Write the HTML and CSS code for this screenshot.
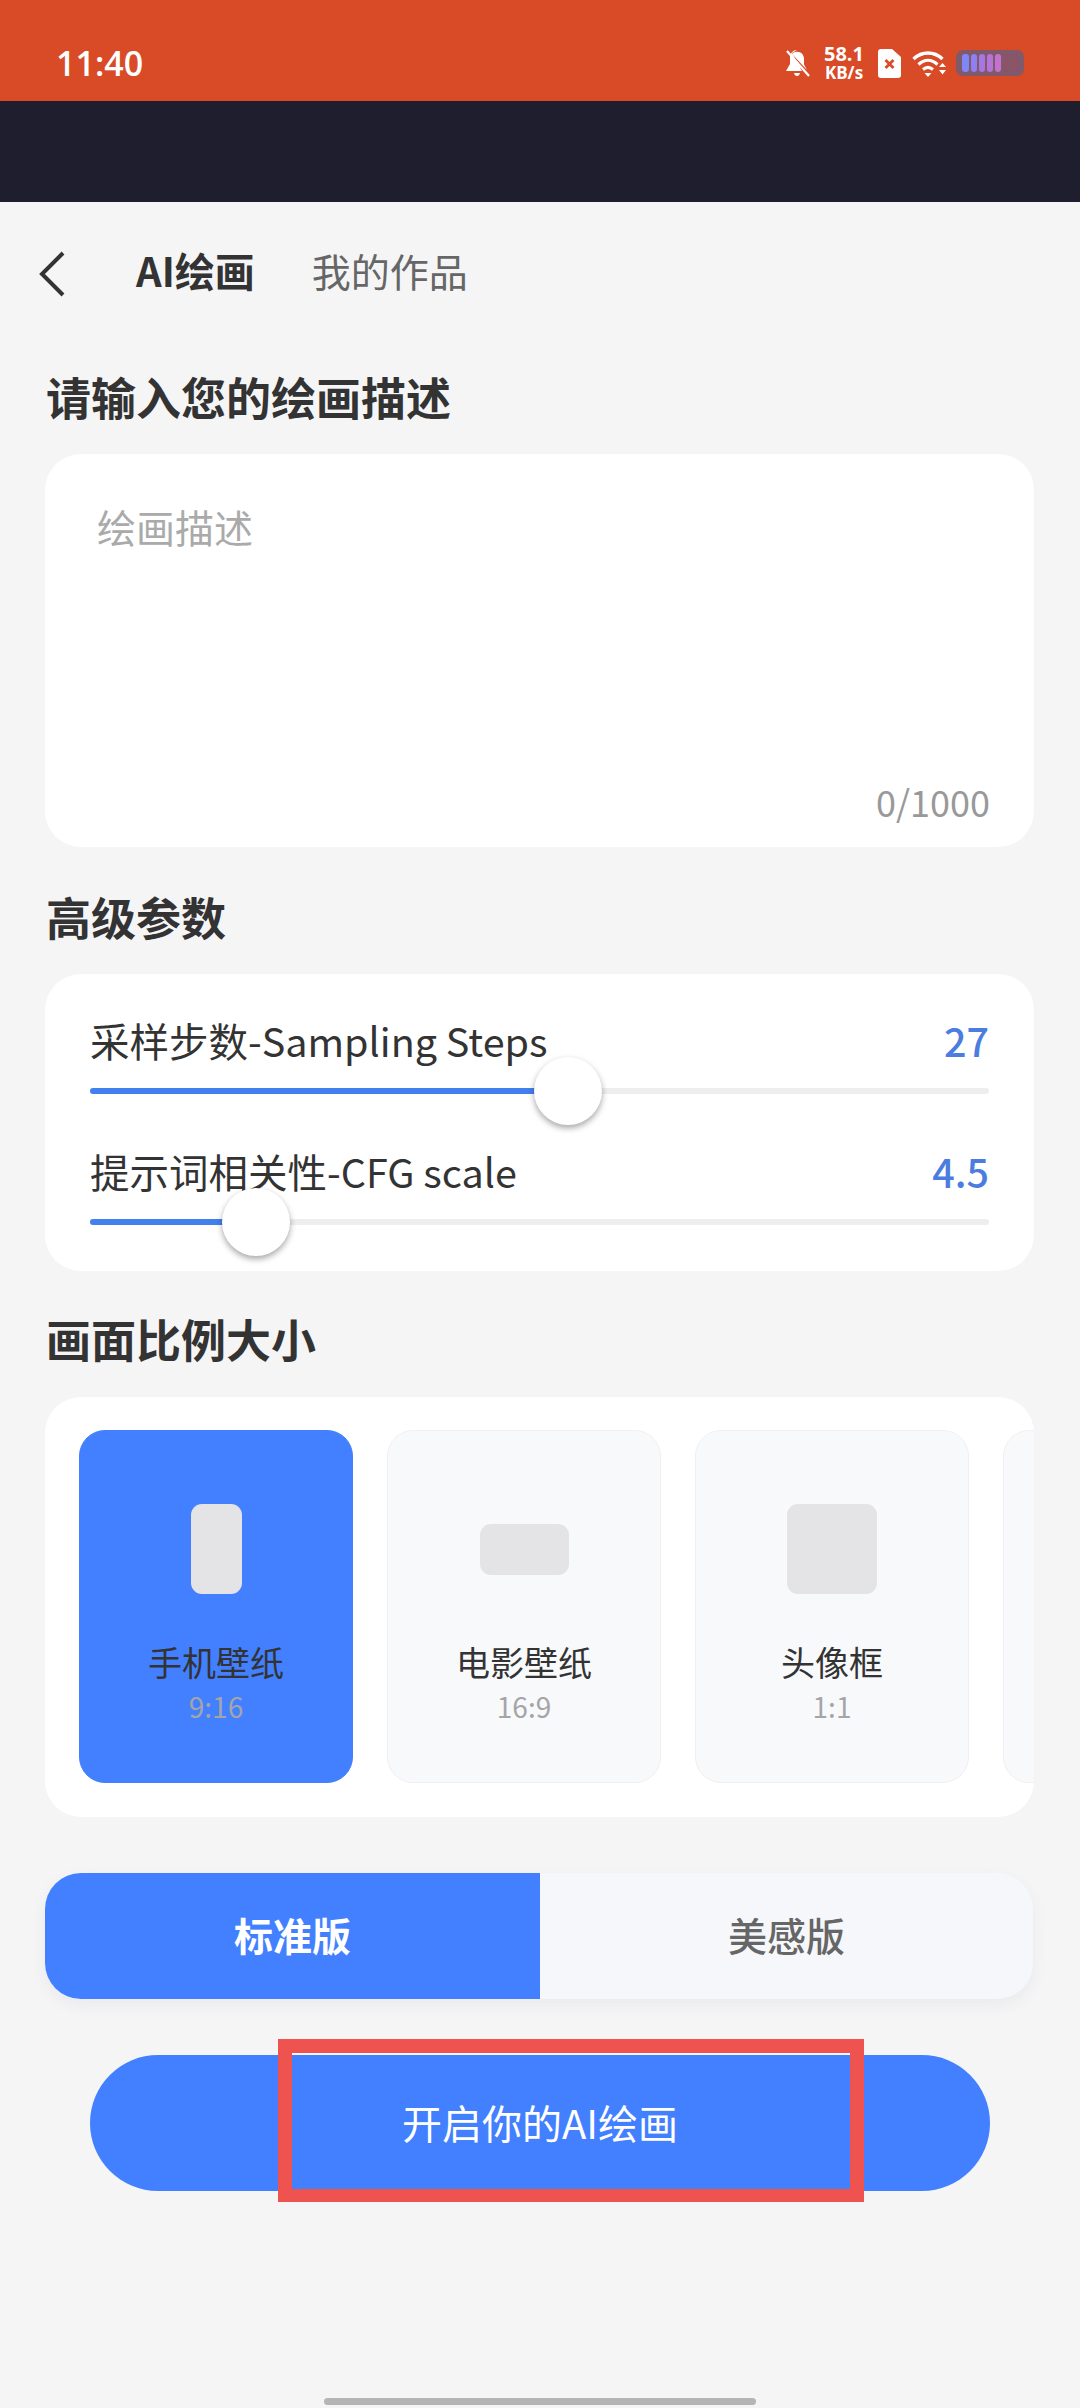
FILE: index.html
```html
<!DOCTYPE html>
<html lang="zh-CN">
<head>
    <meta charset="UTF-8">
    <meta name="viewport" content="width=device-width, initial-scale=1.0">
    <title>AI绘画</title>
    <link rel="stylesheet" href="styles.css">
</head>
<body>
    <div class="status-bar">
        <span class="clock">11:40</span>
        <div class="status-icons">
            <svg class="icon-bell" width="27" height="29" viewBox="0 0 27 29">
                <path d="M13 1c-4 0-7 3-7 8v6l-4 7h16L8 4" fill="#fff"/>
                <path d="M8 5c1.400-1.500 3-2.200 5-2.200 4.500 0 7 3.200 7 7.200v5.500l3 5.500z" fill="#fff"/>
                <path d="M10 24h6c-.5 2-1.500 3-3 3s-2.500-1-3-3z" fill="#fff"/>
                <path d="M3 2l22 25" stroke="#fff" stroke-width="2.200"/>
            </svg>
            <div class="net-speed">
                <span class="net-value">58.1</span>
                <span class="net-unit">KB/s</span>
            </div>
            <svg class="icon-sim" width="23" height="29" viewBox="0 0 23 29">
                <path d="M3 0h11l9 8v18a3 3 0 0 1-3 3H3a3 3 0 0 1-3-3V3a3 3 0 0 1 3-3z" fill="#fff"/>
                <path d="M7.500 11l8 8M15.500 11l-8 8" stroke="#d84b26" stroke-width="2.800"/>
            </svg>
            <svg class="icon-wifi" width="34" height="27" viewBox="0 0 34 27">
                <path d="M1.500 9C10 1 22 1 30.500 9" fill="none" stroke="#fff" stroke-width="3.400"/>
                <path d="M6.500 14.500c6-5.500 13-5.500 19 0" fill="none" stroke="#fff" stroke-width="3.200"/>
                <path d="M11 19.500c3.500-3 6.500-3 10 0" fill="none" stroke="#fff" stroke-width="3"/>
                <path d="M12.500 23h7L16 27z" fill="#fff"/>
                <path d="M27 17l3.500-4 3.500 4zM27 20h7l-3.500 4.500z" fill="#fff"/>
            </svg>
            <svg class="icon-battery" width="68" height="26" viewBox="0 0 68 26">
                <rect width="68" height="26" rx="7" fill="#80596a"/>
                <rect x="6" y="4" width="7" height="18" rx="3" fill="#7f86f5"/>
                <rect x="15" y="4" width="6" height="18" rx="3" fill="#8f80f0"/>
                <rect x="23" y="4" width="6" height="18" rx="3" fill="#a477e2"/>
                <rect x="31" y="4" width="6" height="18" rx="3" fill="#b673d8"/>
                <rect x="39" y="4" width="6" height="18" rx="3" fill="#c272cf"/>
                <rect x="48" y="4" width="6" height="18" rx="2" fill="#8c5268"/>
                <rect x="56" y="4" width="6" height="18" rx="2" fill="#8c5268"/>
            </svg>
        </div>
    </div>
    <div class="dark-bar"></div>

    <div class="nav">
        <svg class="back" width="28" height="46" viewBox="0 0 28 46">
            <path d="M25 2L4 23l21 21" fill="none" stroke="#333" stroke-width="4"/>
        </svg>
        <span class="nav-tab active">AI绘画</span>
        <span class="nav-tab">我的作品</span>
    </div>

    <h2 class="section-title first">请输入您的绘画描述</h2>
    <div class="card prompt-card">
        <div class="placeholder">绘画描述</div>
        <div class="counter">0/1000</div>
    </div>

    <h2 class="section-title">高级参数</h2>
    <div class="card sliders-card">
        <div class="slider-head">
            <span>采样步数-Sampling Steps</span>
            <span class="slider-value">27</span>
        </div>
        <div class="track">
            <div class="track-fill" style="width: 478px"></div>
            <div class="thumb" style="left: 478px"></div>
        </div>
        <div class="slider-head second">
            <span>提示词相关性-CFG scale</span>
            <span class="slider-value">4.5</span>
        </div>
        <div class="track">
            <div class="track-fill" style="width: 166px"></div>
            <div class="thumb" style="left: 166px"></div>
        </div>
    </div>

    <h2 class="section-title ratio-title">画面比例大小</h2>
    <div class="card ratio-card">
        <div class="tile selected">
            <div class="tile-slot"><div class="shape shape-tall"></div></div>
            <div class="tile-name">手机壁纸</div>
            <div class="tile-ratio">9:16</div>
        </div>
        <div class="tile">
            <div class="tile-slot"><div class="shape shape-wide"></div></div>
            <div class="tile-name">电影壁纸</div>
            <div class="tile-ratio">16:9</div>
        </div>
        <div class="tile">
            <div class="tile-slot"><div class="shape shape-square"></div></div>
            <div class="tile-name">头像框</div>
            <div class="tile-ratio">1:1</div>
        </div>
        <div class="tile"></div>
    </div>

    <div class="version-toggle">
        <div class="version on">标准版</div>
        <div class="version">美感版</div>
    </div>

    <div class="start-wrap">
        <button class="start-btn">开启你的AI绘画</button>
        <div class="red-mark"></div>
    </div>

    <div class="home-bar"></div>
</body>
</html>
```

FILE: styles.css
```css
* {
    box-sizing: border-box;
}
body {
    margin: 0;
    width: 1080px;
    height: 2408px;
    overflow: hidden;
    background-color: #f5f5f6;
    font-family: "Noto Sans CJK SC", "Noto Sans", sans-serif;
    color: #333;
}
.status-bar {
    height: 101px;
    background-color: #d84b26;
    display: flex;
    align-items: center;
    justify-content: space-between;
    padding: 25px 56px 0 56px;
    color: #fff;
}
.clock {
    font-family: "Open Sans", sans-serif;
    font-size: 34px;
    font-weight: 600;
}
.status-icons {
    display: flex;
    align-items: center;
}
.net-speed {
    display: flex;
    flex-direction: column;
    align-items: center;
    width: 40px;
    margin-left: 13px;
    font-family: "Open Sans", sans-serif;
    font-weight: 700;
}
.net-value {
    font-size: 20px;
    line-height: 20px;
}
.net-unit {
    font-size: 17px;
    line-height: 18px;
}
.icon-sim {
    margin-left: 14px;
}
.icon-wifi {
    margin-left: 11px;
}
.icon-battery {
    margin-left: 10px;
}
.dark-bar {
    height: 101px;
    background-color: #1e1e2e;
}
.nav {
    height: 142px;
    display: flex;
    align-items: center;
    padding-left: 38px;
}
.back {
    margin-top: 2px;
}
.nav-tab {
    font-size: 39px;
    color: #666;
    margin-left: 57px;
    line-height: 50px;
    position: relative;
    top: -3px;
}
.nav-tab.active {
    font-size: 40px;
    font-weight: 700;
    color: #333;
    margin-left: 70px;
}
.section-title {
    margin: 40px 0 27px 46px;
    font-size: 45px;
    line-height: 60px;
    font-weight: 700;
    color: #333;
}
.section-title.first {
    margin-top: 23px;
}
.section-title.ratio-title {
    margin-top: 38px;
    margin-bottom: 28px;
}
.card {
    margin: 0 46px 0 45px;
    background-color: #fff;
    border-radius: 36px;
}
.prompt-card {
    height: 393px;
    display: flex;
    flex-direction: column;
    justify-content: space-between;
    padding: 47px 44px 21px 52px;
}
.placeholder {
    font-size: 39px;
    line-height: 50px;
    color: #aaa;
}
.counter {
    text-align: right;
    font-size: 36px;
    line-height: 50px;
    color: #999;
}
.sliders-card {
    height: 297px;
    padding: 38px 45px 0 45px;
}
.slider-head {
    display: flex;
    justify-content: space-between;
    font-size: 39.5px;
    line-height: 56px;
    color: #333;
}
.slider-head.second {
    margin-top: 49px;
}
.slider-value {
    color: #4a7ddf;
    font-weight: 500;
}
.track {
    position: relative;
    height: 6px;
    margin-top: 20px;
    background-color: #eee;
    border-radius: 3px;
}
.track-fill {
    height: 100%;
    background-color: #4280f0;
    border-radius: 3px;
}
.thumb {
    position: absolute;
    top: -31px;
    margin-left: -34px;
    width: 68px;
    height: 68px;
    border-radius: 50%;
    background-color: #fff;
    box-shadow: 0 3px 6px rgba(0, 0, 0, 0.35);
}
.ratio-card {
    height: 420px;
    padding: 33px 0 0 34px;
    display: flex;
    gap: 34px;
    overflow: hidden;
}
.tile {
    flex: none;
    width: 274px;
    height: 353px;
    padding-top: 73px;
    border-radius: 26px;
    background-color: #f8f9fb;
    border: 1px solid #f0f0f2;
    display: flex;
    flex-direction: column;
    align-items: center;
}
.tile.selected {
    background-color: #4280ff;
    border-color: #4280ff;
}
.tile-slot {
    height: 90px;
    display: flex;
    align-items: center;
}
.shape {
    background-color: #e4e4e6;
    border-radius: 11px;
}
.shape-tall {
    width: 51px;
    height: 90px;
}
.shape-wide {
    width: 89px;
    height: 51px;
}
.shape-square {
    width: 90px;
    height: 90px;
}
.tile-name {
    margin-top: 46px;
    font-size: 34px;
    line-height: 44px;
    color: #333;
}
.tile-ratio {
    margin-top: 4px;
    font-size: 28px;
    line-height: 36px;
    color: #a5a5a8;
}
.version-toggle {
    margin: 56px 47px 0 45px;
    height: 126px;
    display: flex;
    border-radius: 36px;
    overflow: hidden;
    box-shadow: 0 6px 16px rgba(60, 70, 100, 0.06);
    background-color: #f5f7fb;
}
.version {
    flex: 1;
    display: flex;
    align-items: center;
    justify-content: center;
    padding-bottom: 4px;
    font-size: 39px;
    font-weight: 500;
    color: #666;
}
.version.on {
    flex: none;
    width: 495px;
    background-color: #4280ff;
    color: #fff;
    font-weight: 700;
}
.start-wrap {
    position: relative;
    margin: 56px 90px 0;
}
.start-btn {
    display: block;
    width: 100%;
    height: 136px;
    padding: 0 0 3px;
    border: none;
    border-radius: 68px;
    background-color: #4280ff;
    color: #fff;
    font-family: inherit;
    font-size: 40px;
}
.red-mark {
    position: absolute;
    left: 188px;
    top: -16px;
    width: 586px;
    height: 163px;
    border: solid #ef5350;
    border-width: 14px 14px 13px;
}
.home-bar {
    width: 432px;
    height: 7px;
    margin: 207px auto 0;
    border-radius: 4px;
    background-color: #b5b5b5;
}
```
